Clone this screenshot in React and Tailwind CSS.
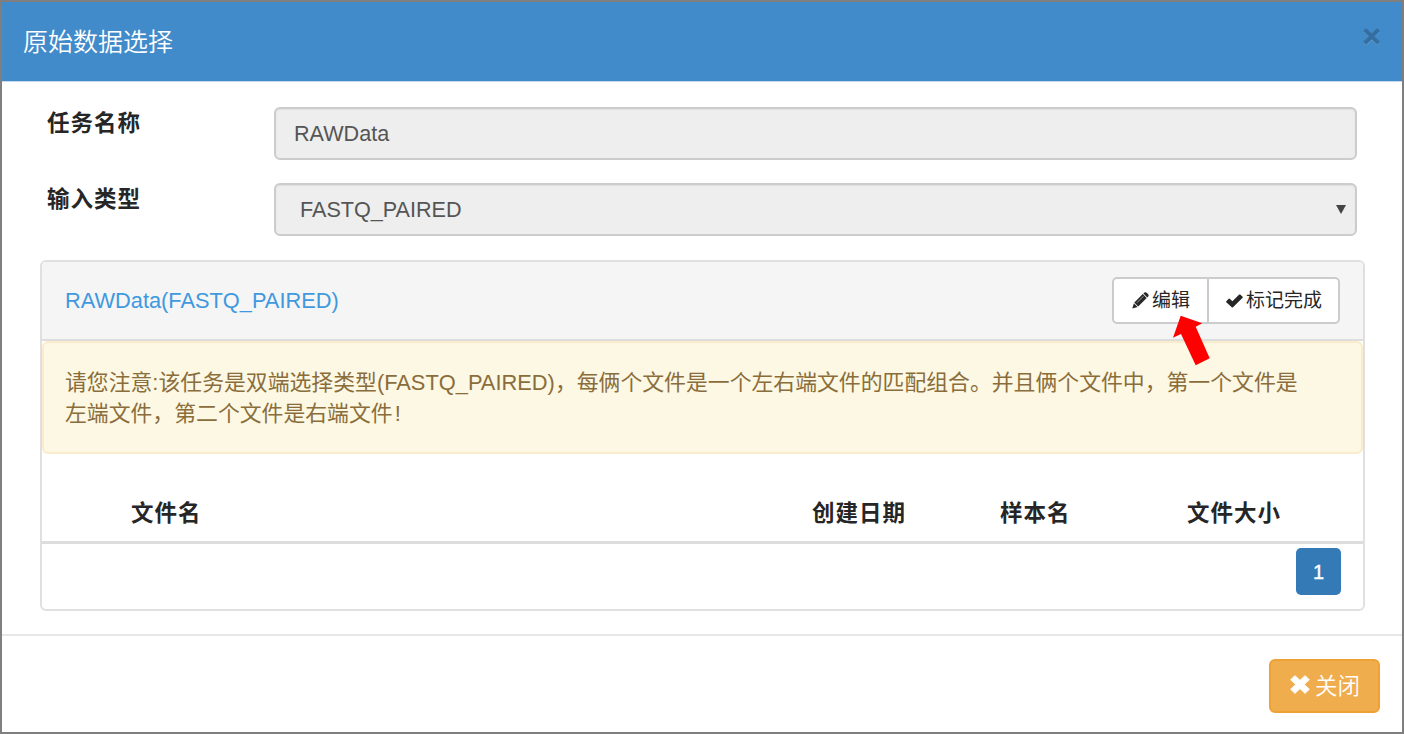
import React from "react";

function PencilIcon() {
  return (
    <svg className="h-[17px] w-[17px] shrink-0" viewBox="0 0 17 17" fill="currentColor" aria-hidden="true">
      <path d="M11.4 1.5 L12.4 .6 Q13.6 -.2 14.7 .7 L16.2 2.2 Q17 3.2 16.3 4.3 L15.3 5.4 Z" />
      <path d="M10.8 2.1 L14.7 6 L6.2 14.5 L2.3 10.6 Z" />
      <path d="M1.9 11.2 L5.6 14.9 L.3 16.6 Z" />
      <path d="M11.4 4.2 L5 10.6" stroke="#fff" strokeWidth=".8" opacity=".7" />
    </svg>
  );
}

function CheckIcon() {
  return (
    <svg className="h-[14px] w-[17px] shrink-0" viewBox="0 0 17 14" fill="currentColor" aria-hidden="true">
      <path d="M.3 7.2 L2.7 4.8 Q3.2 4.4 3.7 4.8 L6.4 7.3 L13.2 .6 Q13.7 .2 14.2 .6 L16.6 2.8 Q17 3.3 16.6 3.8 L7 13.3 Q6.4 13.8 5.8 13.3 L.3 8.2 Q-.1 7.7 .3 7.2 Z" />
    </svg>
  );
}

function RemoveIcon() {
  return (
    <svg className="mb-[3px] h-[19px] w-[20px] shrink-0" viewBox="0 0 19 19" preserveAspectRatio="none" fill="currentColor" aria-hidden="true">
      <path d="M4.7 .5 L9.5 5.3 L14.3 .5 L18.5 4.7 L13.7 9.5 L18.5 14.3 L14.3 18.5 L9.5 13.7 L4.7 18.5 L.5 14.3 L5.3 9.5 L.5 4.7 Z" strokeLinejoin="round" stroke="currentColor" strokeWidth=".6" />
    </svg>
  );
}

function Field({ label, children }) {
  return (
    <div className="flex h-[53px]">
      <label className="w-[227px] shrink-0 pt-[1px] text-[22.5px] leading-[31px] font-bold tracking-[1px] text-[#262626]">
        {label}
      </label>
      <div className="flex flex-1 items-center rounded-[6px] border-2 border-[#ccc] bg-[#eee] text-[21.6px] text-[#555] shadow-[inset_0_1px_2px_rgba(0,0,0,0.06)]">
        {children}
      </div>
    </div>
  );
}

export default function App() {
  return (
    <div className="relative flex h-[734px] w-[1404px] flex-col border-2 border-[#7f7f7f] bg-white font-['Liberation_Sans','Noto_Sans_CJK_SC',sans-serif] whitespace-nowrap">
      <header className="flex h-[80px] shrink-0 items-start justify-between border-b border-[#c5d7e8] bg-[#428bca] pr-[21px] pl-[21px]">
        <h1 className="pt-[21px] text-[25px] leading-[38px] font-[350] text-white">原始数据选择</h1>
        <button className="pt-[17px] text-[32px] leading-[34px] font-bold text-black opacity-20 [-webkit-text-stroke:0.6px_#000] [text-shadow:0_1px_0_#fff]">×</button>
      </header>

      <main className="flex h-[554px] shrink-0 flex-col border-b-2 border-[#e8e8e8] pt-[25px] pr-[37px] pl-[38px]">
        <div className="flex flex-col gap-[23px] pr-[8px] pl-[7px]">
          <Field label="任务名称">
            <span className="pt-[2px] pl-[18px]">RAWData</span>
          </Field>
          <Field label="输入类型">
            <span className="flex-1 pt-[2px] pl-[24px]">FASTQ_PAIRED</span>
            <svg className="mr-[9px] h-[9px] w-[10px]" viewBox="0 0 10 9" fill="#444">
              <path d="M0 0H10L5 9Z" />
            </svg>
          </Field>
        </div>

        <section className="mt-[24px] h-[351px] shrink-0 overflow-hidden rounded-[6px] border-2 border-[#e0e0e0]">
          <div className="flex h-[79px] items-center justify-between border-b-2 border-[#ddd] bg-[#f5f5f5] pr-[23px] pl-[23px]">
            <a className="pt-[2px] text-[21.8px] text-[#4099de]">RAWData(FASTQ_PAIRED)</a>
            <div className="flex h-[47px] rounded-[5px] border-2 border-[#ccc] bg-white text-[19px] text-[#262626]">
              <button className="flex w-[95px] items-center gap-[3px] border-r-2 border-[#ccc] pl-[18px]">
                <PencilIcon />
                <span className="pt-[2px]">编辑</span>
              </button>
              <button className="flex w-[129px] items-center gap-[3px] pl-[17px]">
                <CheckIcon />
                <span className="pt-[2px]">标记完成</span>
              </button>
            </div>
          </div>

          <div className="h-[113px] rounded-[6px] border-2 border-[#faebcc] bg-[#fcf8e3] pt-[24px] pl-[21px] text-[21.85px] leading-[31px] text-[#8a6d3b]">
            <p>请您注意:该任务是双端选择类型(FASTQ_PAIRED)，每俩个文件是一个左右端文件的匹配组合。并且俩个文件中，第一个文件是</p>
            <p>左端文件，第二个文件是右端文件<span className="pl-[2px]">!</span></p>
          </div>

          <div className="grid h-[90px] grid-cols-[681px_188px_187px_1fr] items-end border-b-[3px] border-[#ddd] pb-[10px] pl-[89px] text-[22.5px] leading-[34px] font-bold tracking-[1px] text-[#262626]">
            <span>文件名</span>
            <span>创建日期</span>
            <span>样本名</span>
            <span>文件大小</span>
          </div>

          <div className="flex justify-end pt-[4px] pr-[22px]">
            <span className="flex h-[47px] w-[45px] items-center justify-center rounded-[5px] bg-[#337ab7] text-[20px] text-white [-webkit-text-stroke:0.4px_#fff]">1</span>
          </div>
        </section>
      </main>

      <footer className="flex justify-end pt-[23px] pr-[22px]">
        <button className="flex h-[54px] w-[111px] items-center gap-[5px] rounded-[6px] border-2 border-[#eea236] bg-[#f0ad4e] pl-[19px] text-[22.5px] font-[350] text-white">
          <RemoveIcon />
          <span className="pt-[2px]">关闭</span>
        </button>
      </footer>

      <svg className="absolute top-[313px] left-[1170px] h-[51px] w-[40px]" viewBox="1172 315 40 51" fill="#f00" aria-hidden="true">
        <path d="M1180.7 315.7 L1202.3 323.3 L1195.7 326.7 L1209.7 358.3 L1195.7 365.3 L1181 334 L1173 337.7 Z" />
      </svg>
    </div>
  );
}
